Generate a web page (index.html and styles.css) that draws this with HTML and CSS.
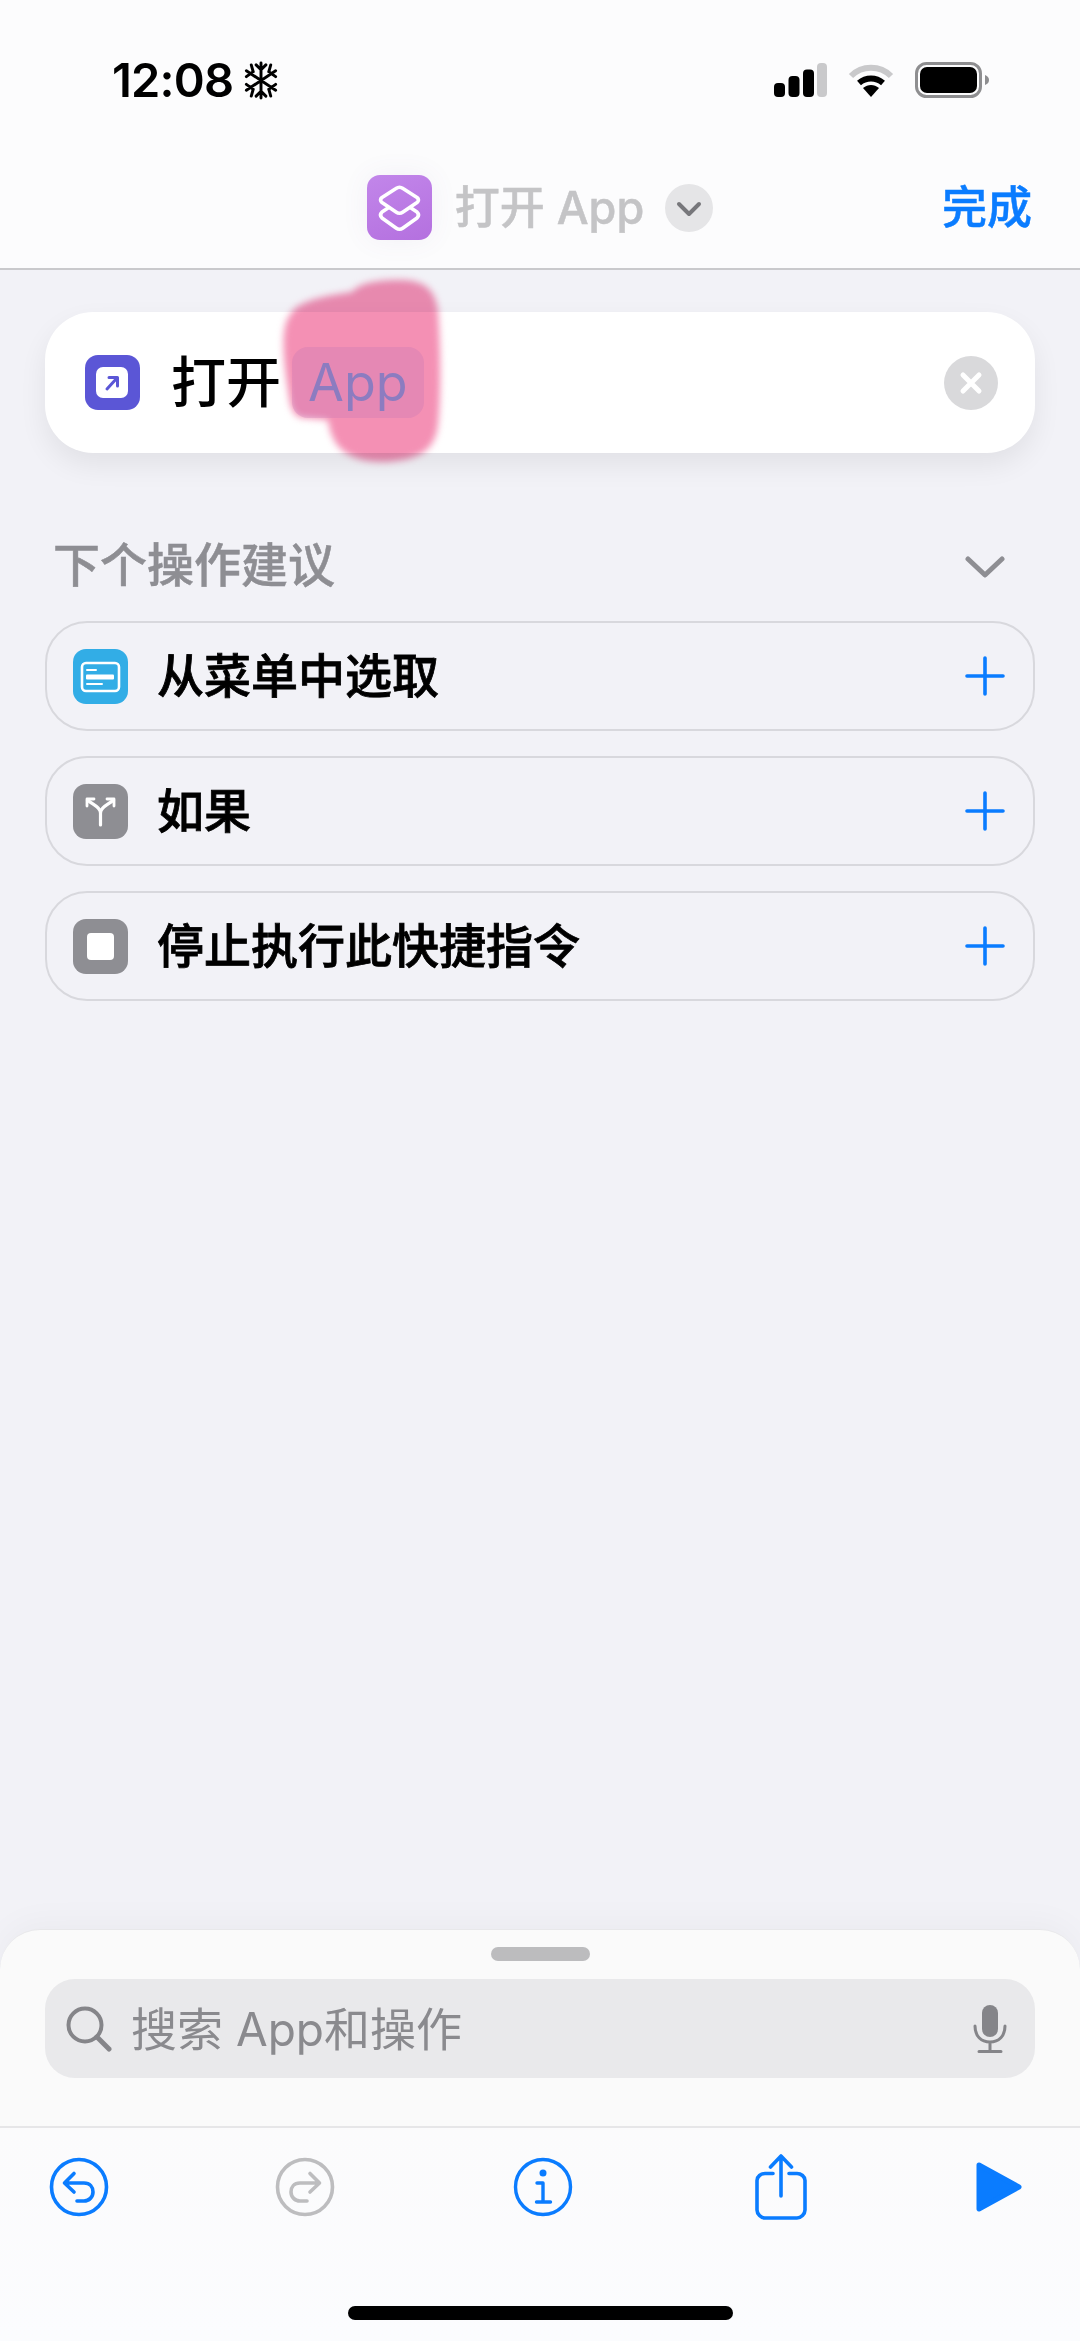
FILE: index.html
```html
<!DOCTYPE html>
<html lang="zh-CN">
<head>
<meta charset="utf-8">
<title>打开 App</title>
<link rel="stylesheet" href="styles.css">
</head>
<body>
<div class="phone">
  <header class="top">
    <div class="status">
      <div class="clock">
        <span class="time">12:08</span>
        <svg class="snow" viewBox="0 0 36 40" fill="none" stroke="#000" stroke-width="3" stroke-linecap="round">
          <path d="M18 2v36M3 10l30 20M33 10L3 30M13 4l5 5 5-5M13 36l5-5 5 5M3 16l7-5-2-7M33 24l-7 5 2 7M33 16l-7-5 2-7M3 24l7 5-2 7"/>
        </svg>
      </div>
      <div class="sys">
        <svg class="signal" viewBox="0 0 53 34">
          <rect x="0" y="20" width="11" height="14" rx="4" fill="#000"/>
          <rect x="14.500" y="13" width="11" height="21" rx="4" fill="#000"/>
          <rect x="29" y="6.500" width="11" height="27.500" rx="4" fill="#000"/>
          <rect x="43" y="0" width="10" height="34" rx="4" fill="#c9c9cb"/>
        </svg>
        <svg class="wifi" viewBox="0 0 46 34" fill="none">
          <path d="M3 13C14 2 32 2 43 13" stroke="#c9c9cb" stroke-width="6"/>
          <path d="M11 20c7-6 17-6 24 0" stroke="#000" stroke-width="6"/>
          <path d="M15 25c5-4 11-4 16 0l-8 9z" fill="#000"/>
        </svg>
        <svg class="battery" viewBox="0 0 74 36">
          <rect x="1.500" y="1.500" width="64" height="33" rx="10" fill="none" stroke="#8e8e90" stroke-width="3"/>
          <rect x="5" y="5" width="57" height="26" rx="7" fill="#000"/>
          <path d="M70 13c3 1 4 3 4 5s-1 4-4 5z" fill="#8e8e90"/>
        </svg>
      </div>
    </div>
    <nav class="nav">
      <span></span>
      <div class="title">
        <div class="app-tile">
          <svg viewBox="0 0 65 65" fill="none" stroke="#fff" stroke-width="3.600" stroke-linejoin="round" stroke-linecap="round">
            <path d="M29 13.500Q32.500 11 36 13.500L50 22.500Q53 25 50 27.500L36 37Q32.500 39.500 29 37L15 27.500Q12 25 15 22.500Z"/>
            <path d="M21 33L15 37Q12 40 15 43L29 53Q32.500 55.500 36 53L50 43Q53 40 50 37L44 33"/>
          </svg>
        </div>
        <span class="title-text">打开 App</span>
        <span class="title-chev">
          <svg viewBox="0 0 48 48" fill="none" stroke="#77777b" stroke-width="4" stroke-linecap="round" stroke-linejoin="round"><path d="M14 20l10 10 10-10"/></svg>
        </span>
      </div>
      <a class="done">完成</a>
    </nav>
  </header>

  <main class="main">
    <section class="card">
      <svg class="blob" viewBox="272 270 180 202"><path d="M292 312C300 300 330 295 352 292C360 282 380 280 400 280C425 280 435 290 438 310C441 350 441 400 438 425C435 450 420 460 385 462C350 462 332 450 328 420L305 418C292 418 290 405 288 390C282 350 282 330 288 318Z"/></svg>
      <span class="tile tile-open">
        <svg viewBox="0 0 55 55"><rect x="11" y="12" width="32" height="31" rx="7" fill="#fff"/><path d="M22 34l10-11M24 22.500h8.500V31" fill="none" stroke="#5b56d6" stroke-width="3" stroke-linecap="round" stroke-linejoin="round"/></svg>
      </span>
      <span class="card-verb">打开</span>
      <span class="chip">App</span>
      <span class="clear">
        <svg viewBox="0 0 54 54" fill="none" stroke="#fff" stroke-width="5" stroke-linecap="round"><path d="M19 19l16 16M35 19L19 35"/></svg>
      </span>
    </section>

    <div class="sec-head">
      <h2 class="sec-title">下个操作建议</h2>
      <svg class="sec-chev" viewBox="0 0 40 24" fill="none" stroke="#8e8e93" stroke-width="5" stroke-linecap="round" stroke-linejoin="round"><path d="M3 4l17 16L37 4"/></svg>
    </div>

    <ul class="rows">
      <li class="row">
        <span class="tile tile-menu">
          <svg viewBox="0 0 55 55" fill="none" stroke="#fff" stroke-linecap="round"><rect x="9" y="14" width="37" height="28" rx="4" stroke-width="2.600"/><path d="M14 21h9M14 35h15" stroke-width="2"/><rect x="13" y="25.500" width="28" height="5" rx="1" fill="#fff" stroke="none"/></svg>
        </span>
        <span class="row-label">从菜单中选取</span>
        <svg class="plus" viewBox="0 0 40 40"><path d="M20 2v36M2 20h36"/></svg>
      </li>
      <li class="row">
        <span class="tile tile-grey">
          <svg viewBox="0 0 55 55" fill="none" stroke="#fff" stroke-width="3.200" stroke-linecap="round" stroke-linejoin="round"><path d="M27.500 41V29C27.500 23 20 21 14.500 16M27.500 29C27.500 23 35 21 40.500 16"/><path d="M14 22v-7h7M41 22v-7h-7" stroke-width="2.800"/></svg>
        </span>
        <span class="row-label">如果</span>
        <svg class="plus" viewBox="0 0 40 40"><path d="M20 2v36M2 20h36"/></svg>
      </li>
      <li class="row">
        <span class="tile tile-grey">
          <svg viewBox="0 0 55 55"><rect x="14" y="14" width="27" height="27" rx="4" fill="#fff"/></svg>
        </span>
        <span class="row-label">停止执行此快捷指令</span>
        <svg class="plus" viewBox="0 0 40 40"><path d="M20 2v36M2 20h36"/></svg>
      </li>
    </ul>
  </main>

  <section class="sheet">
    <div class="handle"></div>
    <div class="search">
      <svg class="mag" viewBox="0 0 46 46" fill="none" stroke="#858589" stroke-width="4" stroke-linecap="round"><circle cx="19" cy="19" r="16.500"/><path d="M31 31l12 12" stroke-width="5"/></svg>
      <span class="search-text">搜索 App和操作</span>
      <svg class="mic" viewBox="0 0 34 48" fill="none" stroke="#858589" stroke-width="3" stroke-linecap="round"><rect x="9" y="0" width="16" height="32" rx="8" fill="#858589" stroke="none"/><path d="M2 21c0 10 6 16 15 16s15-6 15-16M17 37v9M6 46.500h22"/></svg>
    </div>
  </section>

  <footer class="toolbar">
    <div class="tools">
      <svg class="tool" viewBox="0 0 60 60" fill="none" stroke="#0a7cff" stroke-width="3.600" stroke-linecap="round" stroke-linejoin="round"><circle cx="30" cy="30" r="27.500"/><path d="M25 16.500L15.500 26l9.500 9M16 26h19c6 0 9 4 9 9s-4 9-9 9h-7"/></svg>
      <svg class="tool tool-redo" viewBox="0 0 60 60" fill="none" stroke="#bdbdbf" stroke-width="3.600" stroke-linecap="round" stroke-linejoin="round"><circle cx="30" cy="30" r="27.500"/><path d="M35 16.500L44.500 26 35 35M44 26H25c-6 0-9 4-9 9s4 9 9 9h7"/></svg>
      <svg class="tool tool-info" viewBox="0 0 60 60" fill="none" stroke="#0a7cff" stroke-width="3.400" stroke-linecap="round" stroke-linejoin="round"><circle cx="30" cy="30" r="27.500"/><circle cx="30" cy="16" r="3.500" fill="#0a7cff" stroke="none"/><path d="M24 26h6v19M23.500 45h14"/></svg>
      <svg class="share" viewBox="0 0 52 66" fill="none" stroke="#0a7cff" stroke-width="3.600" stroke-linecap="round" stroke-linejoin="round"><path d="M18 19.500H10c-4 0-8 3-8 7V56c0 4 4 8 8 8h32c4 0 8-4 8-8V26.500c0-4-4-7-8-7h-8M26 2v40M15.500 13L26 2l10.500 11"/></svg>
      <svg class="play" viewBox="0 0 46 50"><path d="M3 3L43 25 3 47z" fill="#0a7cff" stroke="#0a7cff" stroke-width="5" stroke-linejoin="round"/></svg>
    </div>
    <div class="home-bar"></div>
  </footer>
</div>
</body>
</html>
```

FILE: styles.css
```css
* { box-sizing: border-box; }
html, body { margin: 0; padding: 0; }
body {
  font-family: Inter, "Noto Sans CJK SC", sans-serif;
  background: #f2f2f7;
  color: #000;
}
svg { display: block; }
.phone {
  width: 1080px;
  height: 2341px;
  display: flex;
  flex-direction: column;
  overflow: hidden;
}

/* header */
.top {
  height: 270px;
  padding-top: 61px;
  background: #fcfcfd;
  border-bottom: 2px solid #c9c9cc;
  flex: none;
}
.status {
  display: flex;
  justify-content: space-between;
  align-items: center;
  height: 38px;
  padding: 0 91px 0 112px;
}
.clock { display: flex; align-items: center; gap: 9px; }
.time {
  font-size: 47px;
  font-weight: 600;
  line-height: 38px;
  letter-spacing: -0.8px;
}
.snow { width: 38px; height: 39px; }
.sys { display: flex; align-items: center; gap: 21px; }
.signal { width: 53px; height: 34px; }
.wifi { width: 46px; height: 34px; }
.battery { width: 74px; height: 36px; }

.nav {
  display: grid;
  grid-template-columns: 1fr auto 1fr;
  align-items: center;
  height: 65px;
  margin-top: 76px;
  padding: 0 48px;
}
.title { display: flex; align-items: center; }
.app-tile {
  width: 65px;
  height: 65px;
  border-radius: 13px;
  background: linear-gradient(160deg, #c286ea, #b470df);
  box-shadow: 0 0 28px rgba(120, 80, 160, 0.07);
}
.title-text {
  margin-left: 23px;
  font-size: 45px;
  font-weight: 500;
  color: #c4c4c6;
  line-height: 65px;
  white-space: nowrap;
  -webkit-text-stroke: 0.5px #c4c4c6;
}
.title-chev {
  margin-left: 21px;
  width: 48px;
  height: 48px;
  border-radius: 50%;
  background: #e5e5e7;
}
.done {
  justify-self: end;
  font-size: 45px;
  font-weight: 500;
  color: #0a7cff;
  line-height: 65px;
  -webkit-text-stroke: 0.5px #0a7cff;
}

/* main */
.main { flex: 1; padding: 42px 45px 0; min-height: 0; }
.card {
  position: relative;
  display: flex;
  align-items: center;
  height: 141px;
  padding: 0 37px 0 40px;
  background: #fff;
  border-radius: 48px;
  box-shadow: 0 12px 28px rgba(0, 0, 0, 0.07);
}
.blob {
  position: absolute;
  left: 227px;
  top: -42px;
  width: 180px;
  height: 202px;
  fill: #f490b4;
  filter: blur(3.500px);
  mix-blend-mode: multiply;
}
.tile {
  flex: none;
  width: 55px;
  height: 55px;
  border-radius: 13px;
}
.tile-open { background: #5b56d6; }
.tile-menu { background: #32ade6; }
.tile-grey { background: #8e8e93; }
.card-verb {
  margin-left: 31px;
  font-size: 55px;
  font-weight: 500;
  line-height: 71px;
}
.chip {
  position: relative;
  margin-left: 11px;
  width: 132px;
  height: 71px;
  padding-left: 16px;
  border-radius: 16px;
  background: rgba(190, 115, 180, 0.28);
  color: #8c7cc0;
  font-size: 52px;
  line-height: 71px;
}
.clear {
  margin-left: auto;
  width: 54px;
  height: 54px;
  border-radius: 50%;
  background: #d9d9db;
}

.sec-head {
  display: flex;
  justify-content: space-between;
  align-items: center;
  height: 60px;
  margin-top: 82px;
  padding: 0 30px 0 8px;
}
.sec-title {
  margin: 0;
  font-size: 47px;
  font-weight: 500;
  color: #8e8e93;
  line-height: 60px;
  -webkit-text-stroke: 0.5px #8e8e93;
}
.sec-chev { width: 40px; height: 24px; margin-top: 4px; }

.rows {
  list-style: none;
  margin: 26px 0 0;
  padding: 0;
  display: flex;
  flex-direction: column;
  gap: 25px;
}
.row {
  display: flex;
  align-items: center;
  height: 110px;
  padding: 0 28px 0 26px;
  border: 2.500px solid #d8d8dd;
  border-radius: 42px;
}
.row-label {
  margin-left: 29px;
  font-size: 47px;
  font-weight: 500;
  line-height: 60px;
  -webkit-text-stroke: 0.8px #000;
}
.plus {
  margin-left: auto;
  width: 40px;
  height: 40px;
  fill: none;
  stroke: #0a7cff;
  stroke-width: 3.600;
  stroke-linecap: round;
}

/* sheet */
.sheet {
  flex: none;
  height: 197px;
  padding: 17px 45px 0;
  background: #fafafa;
  border-radius: 40px 40px 0 0;
  border-top: 1px solid #e8e8ea;
  box-shadow: 0 -6px 34px rgba(0, 0, 0, 0.035);
}
.handle {
  width: 99px;
  height: 14px;
  margin: 0 auto;
  border-radius: 7px;
  background: #bcbcbe;
}
.search {
  display: flex;
  align-items: center;
  height: 99px;
  margin-top: 18px;
  padding: 0 28px 0 21px;
  border-radius: 30px;
  background: #e9e9eb;
}
.mag { width: 46px; height: 46px; flex: none; }
.search-text {
  margin-left: 19px;
  font-size: 46px;
  color: #8a8a8e;
  line-height: 60px;
  white-space: nowrap;
}
.mic { margin-left: auto; width: 34px; height: 48px; }

/* toolbar */
.toolbar {
  flex: none;
  height: 215px;
  padding-top: 26px;
  background: linear-gradient(#fbfbfc, #fbfcfe);
  border-top: 2px solid #e6e6e8;
}
.tools {
  display: flex;
  align-items: center;
  height: 66px;
  padding-left: 49px;
}
.tool { width: 60px; height: 60px; flex: none; }
.tool-redo { margin-left: 166px; }
.tool-info { margin-left: 178px; }
.share { width: 52px; height: 66px; margin-left: 182px; flex: none; }
.play { width: 46px; height: 50px; margin-left: 169px; flex: none; }
.home-bar {
  width: 385px;
  height: 14px;
  margin: 86px auto 0;
  border-radius: 7px;
  background: #000;
}
```
